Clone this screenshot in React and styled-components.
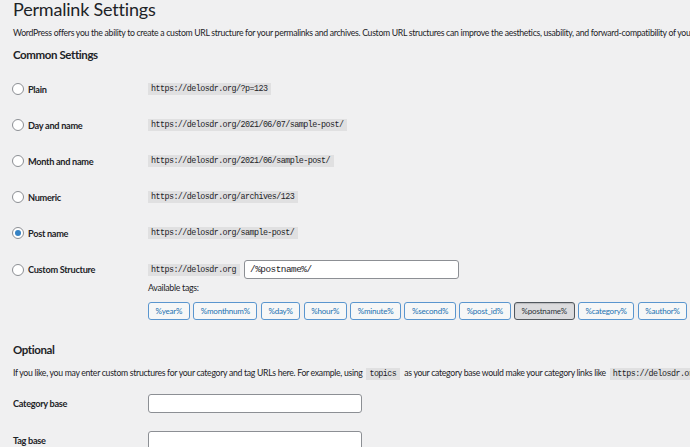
import React from "react";
import styled, { createGlobalStyle } from "styled-components";

const Global = createGlobalStyle`
  html, body {
    margin: 0;
    padding: 0;
    background: #f0f0f1;
    overflow: hidden;
  }
  body {
    font-family: Lato, "Noto Sans", sans-serif;
    color: #1d2327;
  }
`;

const Page = styled.div`
  width: 690px;
  height: 447px;
  padding: 0 0 0 13px;
  box-sizing: border-box;
  overflow: hidden;
`;

const Title = styled.h1`
  margin: 0;
  font-size: 18px;
  font-weight: 400;
  letter-spacing: -0.2px;
  line-height: 18px;
`;

const Text = styled.p`
  margin: ${(p) => p.$top}px 0 0;
  font-size: 8.7px;
  letter-spacing: -0.3px;
  line-height: 14px;
  white-space: nowrap;
`;

const Heading = styled.h2`
  margin: ${(p) => p.$top}px 0 0;
  font-size: 11.5px;
  font-weight: 700;
  letter-spacing: -0.4px;
  line-height: 16px;
`;

const Rows = styled.div`
  margin-top: ${(p) => p.$top}px;
  display: flex;
  flex-direction: column;
`;

const Row = styled.div`
  display: grid;
  grid-template-columns: 135px 1fr;
  align-items: ${(p) => (p.$top ? "start" : "center")};
  height: ${(p) => (p.$h ? `${p.$h}px` : "auto")};
`;

const Choice = styled.label`
  display: flex;
  align-items: center;
  gap: 4px;
  margin-left: -1px;
  font-size: 9.2px;
  font-weight: 700;
  letter-spacing: -0.3px;
  ${(p) => p.$top && `height: 19px; margin-top: 9px;`}
`;

const Radio = styled.span`
  width: 12px;
  height: 12px;
  box-sizing: border-box;
  border-radius: 50%;
  border: 1px solid #8c8f94;
  background: #fff;
  display: flex;
  align-items: center;
  justify-content: center;
  &::before {
    content: "";
    width: 6px;
    height: 6px;
    border-radius: 50%;
    background: ${(p) => (p.$on ? "#3582c4" : "transparent")};
  }
`;

const Code = styled.code`
  display: inline-block;
  font-family: "Liberation Mono", "DejaVu Sans Mono", monospace;
  font-size: 8.4px;
  letter-spacing: -0.55px;
  line-height: 12px;
  padding: 0 4px 0 3px;
  background: #e0e0e1;
  color: #1d2327;
  white-space: nowrap;
`;

const InlineCode = styled(Code)`
  margin: 0 2px;
`;

const Content = styled.div`
  display: flex;
  flex-direction: column;
  align-items: flex-start;
  padding-top: ${(p) => p.$pad || 0}px;
`;

const Structure = styled.div`
  display: flex;
  align-items: center;
  gap: 4px;
  height: 19px;
`;

const TextInput = styled.div`
  box-sizing: border-box;
  width: ${(p) => p.$w}px;
  height: ${(p) => p.$h}px;
  background: #fff;
  border: 1px solid #8c8f94;
  border-radius: 3px;
  display: flex;
  align-items: center;
  padding: 0 5px;
  font-family: "Liberation Mono", "DejaVu Sans Mono", monospace;
  font-size: 9.4px;
  letter-spacing: -0.5px;
`;

const Small = styled.div`
  margin-top: 2px;
  font-size: 8.8px;
  letter-spacing: -0.28px;
  line-height: 14px;
`;

const Tags = styled.div`
  margin-top: 7px;
  display: flex;
  gap: 3.5px;
`;

const Tag = styled.button`
  box-sizing: border-box;
  height: 18px;
  padding: 0 6.5px;
  border-radius: 3px;
  font-family: Lato, sans-serif;
  font-size: 8px;
  letter-spacing: -0.2px;
  border: 1px solid ${(p) => (p.$on ? "#50575e" : "#5a96cf")};
  background: ${(p) => (p.$on ? "#dcdcde" : "#f6f7f7")};
  color: ${(p) => (p.$on ? "#2c3338" : "#2271b1")};
  box-shadow: ${(p) => (p.$on ? "inset 0 1px 1px rgba(0,0,0,.15)" : "none")};
`;

const FieldLabel = styled.div`
  font-size: 9.2px;
  font-weight: 700;
  letter-spacing: -0.3px;
`;

const choices = [
  ["Plain", "https://delosdr.org/?p=123"],
  ["Day and name", "https://delosdr.org/2021/06/07/sample-post/"],
  ["Month and name", "https://delosdr.org/2021/06/sample-post/"],
  ["Numeric", "https://delosdr.org/archives/123"],
  ["Post name", "https://delosdr.org/sample-post/", true],
];

const tags = [
  "%year%", "%monthnum%", "%day%", "%hour%", "%minute%",
  "%second%", "%post_id%", "%postname%", "%category%", "%author%",
];

export default function App() {
  return (
    <Page>
      <Global />
      <Title>Permalink Settings</Title>
      <Text $top={8}>
        WordPress offers you the ability to create a custom URL structure for your permalinks and archives. Custom URL structures can improve the aesthetics, usability, and forward-compatibility of your links.
      </Text>
      <Heading $top={7}>Common Settings</Heading>

      <Rows $top={8}>
        {choices.map(([name, url, on]) => (
          <Row key={name} $h={36}>
            <Choice>
              <Radio $on={on} />
              {name}
            </Choice>
            <Content>
              <Code>{url}</Code>
            </Content>
          </Row>
        ))}
        <Row $top>
          <Choice $top>
            <Radio />
            Custom Structure
          </Choice>
          <Content $pad={9}>
            <Structure>
              <Code>https://delosdr.org</Code>
              <TextInput $w={215} $h={19}>/%postname%/</TextInput>
            </Structure>
            <Small>Available tags:</Small>
            <Tags>
              {tags.map((t) => (
                <Tag key={t} $on={t === "%postname%"}>{t}</Tag>
              ))}
            </Tags>
          </Content>
        </Row>
      </Rows>

      <Heading $top={22}>Optional</Heading>
      <Text $top={8}>
        If you like, you may enter custom structures for your category and tag URLs here. For example, using <InlineCode>topics</InlineCode> as your category base would make your category links like <InlineCode>https://delosdr.org/topics/uncategorized/</InlineCode>. If you leave these blank the defaults will be used.
      </Text>

      <Rows $top={5}>
        <Row $h={37}>
          <FieldLabel>Category base</FieldLabel>
          <TextInput $w={214} $h={19} />
        </Row>
        <Row $h={37}>
          <FieldLabel>Tag base</FieldLabel>
          <TextInput $w={214} $h={19} />
        </Row>
      </Rows>
    </Page>
  );
}
